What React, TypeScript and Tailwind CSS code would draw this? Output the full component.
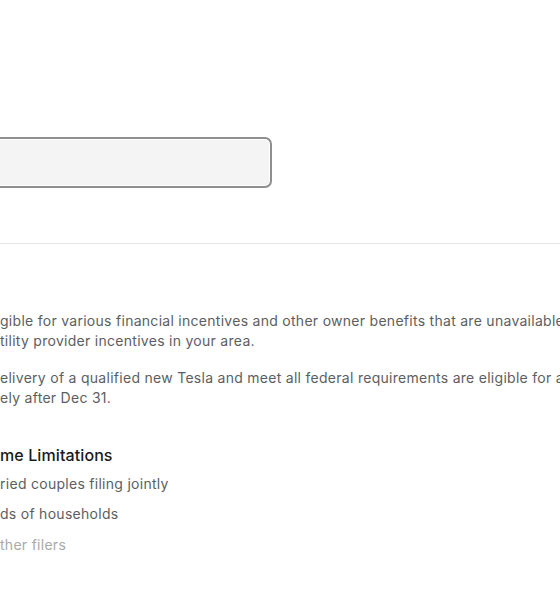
export default function App() {
  return (
    <div className="w-[560px] h-[600px] overflow-hidden bg-white text-[14px] leading-[20px] tracking-[0.28px] text-[#5c5e62]" style={{ fontFamily: 'Inter, "Noto Sans", sans-serif' }}>
      <div className="pt-[137px]">
        <div className="ml-[-40px] w-[312px] h-[51px] rounded-[7px] border-2 border-[#8f8f8f] bg-[#f4f4f4] shadow-[inset_0_0_0_1px_#ffffff]" />
      </div>
      <div className="mt-[55px] border-t border-[#e6e6e6]" />
      <div className="pt-[67px] whitespace-nowrap">
        <p>
          gible for various financial incentives and other owner benefits that are unavailable
          <br />
          tility provider incentives in your area.
        </p>
        <p className="mt-[17px]">
          elivery of a qualified new Tesla and meet all federal requirements are eligible for a
          <br />
          ely after Dec 31.
        </p>
        <h3 className="mt-[35px] text-[16px] leading-[24px] tracking-[0.1px] font-medium text-[#171a20]">me Limitations</h3>
        <ul className="mt-[7px] flex flex-col gap-[10px]">
          <li>ried couples filing jointly</li>
          <li>ds of households</li>
          <li className="mt-[1px] text-[#a8a9ab]">ther filers</li>
        </ul>
      </div>
    </div>
  )
}
